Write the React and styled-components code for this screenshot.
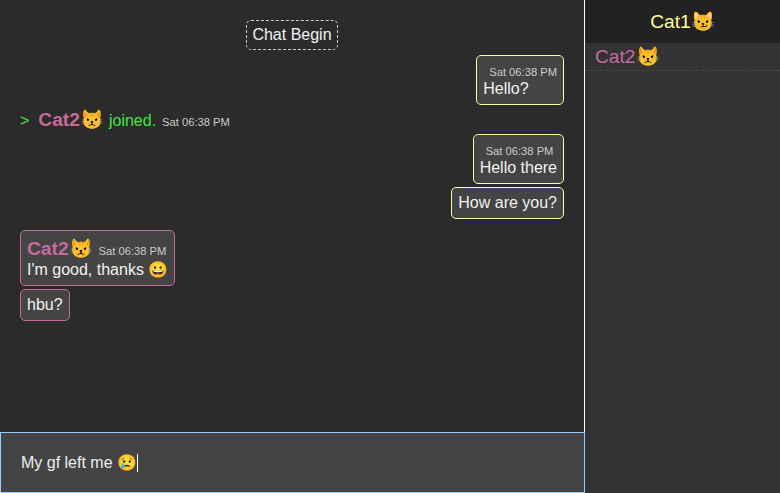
import React from "react";
import styled, { createGlobalStyle } from "styled-components";

const Global = createGlobalStyle`
  html, body { margin: 0; padding: 0; height: 100%; background: #2b2b2b; }
  body { font-family: "Liberation Sans", Arial, sans-serif; color: #f2f2f2; }
  #root { height: 100%; }
`;
const Page = styled.div`
  display: flex;
  width: 780px;
  height: 493px;
  overflow: hidden;
`;
const ChatColumn = styled.main`
  width: 585px;
  flex: none;
  display: flex;
  flex-direction: column;
  background: #2b2b2b;
`;
const Feed = styled.div`
  flex: 1;
  min-height: 0;
  display: flex;
  flex-direction: column;
  align-items: flex-start;
  padding: 20px 20px 0;
  border-right: 1px solid #ffffff;
`;
const ChatBegin = styled.div`
  align-self: center;
  box-sizing: border-box;
  height: 30px;
  padding: 5px;
  font-size: 16px;
  line-height: 18px;
  border: 1px dashed #cfcfcf;
  border-radius: 5px;
  margin-bottom: 5px;
`;
const Bubble = styled.div`
  align-self: ${(p) => (p.$mine ? "flex-end" : "flex-start")};
  padding: 6px;
  margin-top: ${(p) => p.$top || 0}px;
  background: #444444;
  border: 1px solid ${(p) => (p.$mine ? "#ffff99" : "#c76a9e")};
  border-radius: 5px;
  font-size: 16px;
  line-height: 18px;
`;
const Stamp = styled.span`
  font-size: 11.2px;
  color: #cccccc;
  margin-left: ${(p) => p.$left || 0}px;
`;
const StampLine = styled.div`
  height: 18px;
  line-height: 18px;
`;
const Body = styled.div`
  white-space: nowrap;
`;
const Head = styled.div`
  height: 24px;
  line-height: 24px;
  white-space: nowrap;
`;
const Name = styled.span`
  font-weight: 700;
  font-size: 19.2px;
  color: #c76a9e;
`;
const JoinRow = styled.div`
  height: 24px;
  margin: 3px 0 2px;
  line-height: 24px;
  font-size: 16px;
  white-space: nowrap;
  color: #44e644;
`;
const Prompt = styled.span`
  margin-right: 9px;
`;
const Joined = styled.span`
  margin: 0 6px 0 5px;
`;
const Composer = styled.div`
  box-sizing: border-box;
  height: 61px;
  flex: none;
  display: flex;
  align-items: center;
  padding: 0 20px;
  background: #444444;
  border: 1px solid #99ccff;
  font-size: 16px;
  color: #eeeeee;
  white-space: pre;
`;
const Caret = styled.span`
  display: inline-block;
  width: 1px;
  height: 18px;
  background: #ffffff;
`;
const Side = styled.aside`
  width: 195px;
  flex: none;
  background: #333333;
`;
const SideHead = styled.div`
  height: 43px;
  display: flex;
  align-items: center;
  justify-content: center;
  background: #222222;
  color: #ffff99;
  font-size: 19.2px;
`;
const SideRow = styled.div`
  height: 27px;
  display: flex;
  align-items: center;
  padding-left: 10px;
  color: #c76a9e;
  font-size: 19.2px;
  border-bottom: 1px dashed #4a4a4a;
`;

export default function App() {
  return (
    <Page>
      <Global />
      <ChatColumn>
        <Feed>
          <ChatBegin>Chat Begin</ChatBegin>
          <Bubble $mine>
            <StampLine><Stamp $left={6}>Sat 06:38 PM</Stamp></StampLine>
            <Body>Hello?</Body>
          </Bubble>
          <JoinRow>
            <Prompt>&gt;</Prompt>
            <Name>Cat2😾</Name>
            <Joined>joined.</Joined>
            <Stamp>Sat 06:38 PM</Stamp>
          </JoinRow>
          <Bubble $mine>
            <StampLine><Stamp $left={6}>Sat 06:38 PM</Stamp></StampLine>
            <Body>Hello there</Body>
          </Bubble>
          <Bubble $mine $top={3}>How are you?</Bubble>
          <Bubble $top={11}>
            <Head>
              <Name>Cat2😾</Name>
              <Stamp $left={6}>Sat 06:38 PM</Stamp>
            </Head>
            <Body>I'm good, thanks 😀</Body>
          </Bubble>
          <Bubble $top={3}>hbu?</Bubble>
        </Feed>
        <Composer>
          My gf left me 😢<Caret />
        </Composer>
      </ChatColumn>
      <Side>
        <SideHead>Cat1😼</SideHead>
        <SideRow>Cat2😾</SideRow>
      </Side>
    </Page>
  );
}
